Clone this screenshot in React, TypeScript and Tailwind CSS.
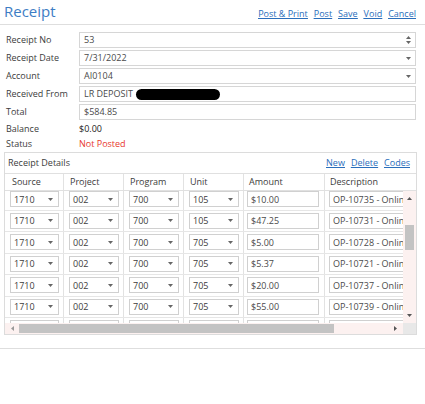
import React from 'react'

const rows = [
  ['1710', '002', '700', '105', '$10.00', 'OP-10735 - Online Payment'],
  ['1710', '002', '700', '105', '$47.25', 'OP-10731 - Online Payment'],
  ['1710', '002', '700', '705', '$5.00', 'OP-10728 - Online Payment'],
  ['1710', '002', '700', '705', '$5.37', 'OP-10721 - Online Payment'],
  ['1710', '002', '700', '705', '$20.00', 'OP-10737 - Online Payment'],
  ['1710', '002', '700', '705', '$55.00', 'OP-10739 - Online Payment'],
  ['1710', '002', '700', '705', '$75.00', 'OP-10740 - Online Payment'],
]

function Caret() {
  return (
    <svg width="5" height="3" viewBox="0 0 5 3" className="shrink-0">
      <path d="M0 0h5L2.5 3z" fill="#666" />
    </svg>
  )
}

function Spin() {
  return (
    <div className="flex flex-col gap-[2px] shrink-0">
      <svg width="5" height="3" viewBox="0 0 5 3">
        <path d="M0 3h5L2.5 0z" fill="#666" />
      </svg>
      <svg width="5" height="3" viewBox="0 0 5 3">
        <path d="M0 0h5L2.5 3z" fill="#666" />
      </svg>
    </div>
  )
}

function FormRow({ label, children, right }: { label: string; children: React.ReactNode; right?: React.ReactNode }) {
  return (
    <div className="flex items-center h-[16px] mb-[2px]">
      <div className="w-[79px] pl-[6px] shrink-0">{label}</div>
      <div className="flex-1 mr-[9px] h-full border border-[#d6d6d6] flex items-center justify-between pl-[4px] pr-[4px] text-[#4a4a4a]">
        <div className="flex items-center">{children}</div>
        {right}
      </div>
    </div>
  )
}

function SelectCell({ value }: { value: string }) {
  return (
    <div className="w-[60px] shrink-0 border-r border-[#e2e2e2] pl-[5px] pr-[4px] flex items-center">
      <div className="w-full h-[16px] border border-[#d0d0d0] flex items-center justify-between pl-[3px] pr-[5px] bg-white">
        <span>{value}</span>
        <Caret />
      </div>
    </div>
  )
}

export default function App() {
  return (
    <div className="w-[425px] h-[404px] bg-white text-[9px] text-[#3c3c3c] font-['Open_Sans',sans-serif] overflow-hidden">
      <header className="flex justify-between items-end h-[25px] border-b border-[#dedede] pl-[4px] pr-[9px]">
        <h1 className="text-[15px] leading-[20px] text-[#3d7dc4] pb-[3px]">Receipt</h1>
        <nav className="flex gap-[6px] text-[9px] text-[#2a6ebb] underline pb-[4px]">
          <a>Post &amp; Print</a>
          <a>Post</a>
          <a>Save</a>
          <a>Void</a>
          <a>Cancel</a>
        </nav>
      </header>

      <section className="pt-[7px]">
        <FormRow label="Receipt No" right={<Spin />}>53</FormRow>
        <FormRow label="Receipt Date" right={<Caret />}>7/31/2022</FormRow>
        <FormRow label="Account" right={<Caret />}>AI0104</FormRow>
        <FormRow label="Received From">
          <span>LR DEPOSIT</span>
          <span className="inline-block w-[84px] h-[11px] rounded-full bg-black ml-[3px]" />
        </FormRow>
        <FormRow label="Total">$584.85</FormRow>
        <div className="flex items-center h-[14px] mt-[1px]">
          <div className="w-[79px] pl-[6px]">Balance</div>
          <div className="text-[#222]">$0.00</div>
        </div>
        <div className="flex items-center h-[14px] mt-[1px]">
          <div className="w-[79px] pl-[6px]">Status</div>
          <div className="text-[#e8372d]">Not Posted</div>
        </div>
      </section>

      <section className="mx-[4px] mt-[1px] w-[413px] border border-[#dcdcdc]">
        <div className="flex justify-between items-center h-[20px] pl-[3px] pr-[6px]">
          <span>Receipt Details</span>
          <div className="flex gap-[6px] text-[#2a6ebb] underline">
            <a>New</a>
            <a>Delete</a>
            <a>Codes</a>
          </div>
        </div>
        <div className="flex h-[18px] border-t border-b border-[#e0e0e0]">
          <div className="w-[59px] border-r border-[#e2e2e2] pl-[7px] flex items-center">Source</div>
          <div className="w-[60px] border-r border-[#e2e2e2] pl-[6px] flex items-center">Project</div>
          <div className="w-[60px] border-r border-[#e2e2e2] pl-[6px] flex items-center">Program</div>
          <div className="w-[60px] border-r border-[#e2e2e2] pl-[6px] flex items-center">Unit</div>
          <div className="w-[81px] border-r border-[#e2e2e2] pl-[5px] flex items-center">Amount</div>
          <div className="flex-1 pl-[5px] flex items-center">Description</div>
        </div>

        <div className="flex h-[132px]">
          <div className="w-[398px] overflow-hidden">
            <div className="-mt-[2px] w-[460px]">
              {rows.map((r, i) => (
                <div key={i} className="flex h-[21.5px] border-b border-[#e6e6e6]">
                  <div className="w-[59px] shrink-0 border-r border-[#e2e2e2] pl-[5px] pr-[4px] flex items-center">
                    <div className="w-full h-[16px] border border-[#d0d0d0] flex items-center justify-between pl-[3px] pr-[5px]">
                      <span>{r[0]}</span>
                      <Caret />
                    </div>
                  </div>
                  <SelectCell value={r[1]} />
                  <SelectCell value={r[2]} />
                  <SelectCell value={r[3]} />
                  <div className="w-[81px] shrink-0 border-r border-[#e2e2e2] pl-[3px] pr-[5px] flex items-center">
                    <div className="w-full h-[16px] border border-[#d0d0d0] flex items-center pl-[3px] text-[#4a4a4a]">{r[4]}</div>
                  </div>
                  <div className="w-[140px] shrink-0 pl-[4px] flex items-center">
                    <div className="w-full h-[16px] border border-[#d0d0d0] flex items-center pl-[3px] text-[#4a4a4a] whitespace-nowrap overflow-hidden">{r[5]}</div>
                  </div>
                </div>
              ))}
            </div>
          </div>
          <div className="flex-1 bg-[#fcf1f0] flex flex-col items-center pt-[6px] pb-[6px]">
            <svg width="5" height="3" viewBox="0 0 5 3" className="shrink-0">
              <path d="M0 3h5L2.5 0z" fill="#555" />
            </svg>
            <div className="w-[9px] h-[25px] bg-[#c3c3c3] mt-[25px] shrink-0" />
            <div className="flex-1" />
            <svg width="5" height="3" viewBox="0 0 5 3" className="shrink-0">
              <path d="M0 0h5L2.5 3z" fill="#555" />
            </svg>
          </div>
        </div>

        <div className="flex h-[11px]">
          <div className="w-[398px] bg-[#fcf1f0] flex items-center">
            <svg width="3" height="5" viewBox="0 0 3 5" className="ml-[6px]">
              <path d="M3 0v5L0 2.5z" fill="#999" />
            </svg>
            <div className="w-[315px] h-[9px] bg-[#c3c3c3] ml-[5px]" />
            <svg width="3" height="5" viewBox="0 0 3 5" className="ml-[60px]">
              <path d="M0 0v5L3 2.5z" fill="#555" />
            </svg>
          </div>
          <div className="flex-1 bg-[#e8e8e8]" />
        </div>
      </section>

      <div className="mt-[13px] border-t border-[#dedede]" />
    </div>
  )
}
